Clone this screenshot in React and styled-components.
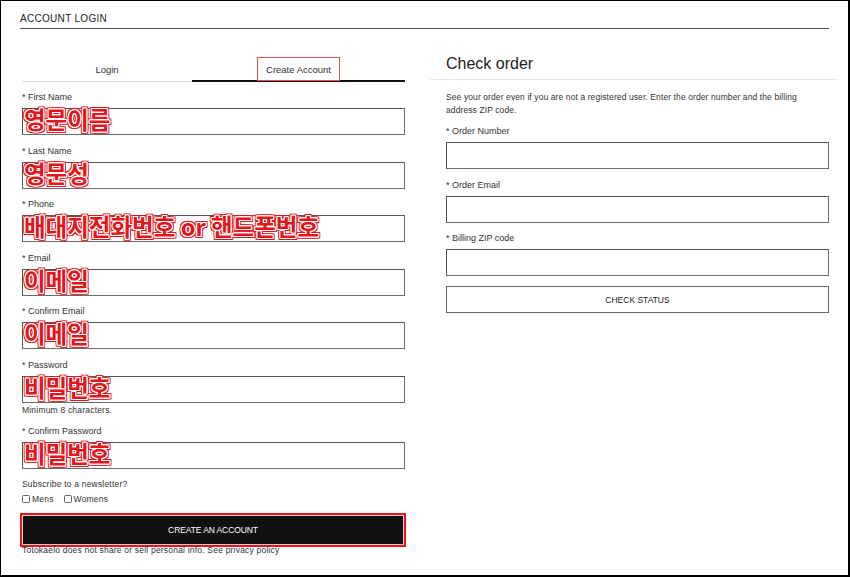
import React from "react";
import styled, { createGlobalStyle } from "styled-components";

const Global = createGlobalStyle`
  html, body { margin: 0; padding: 0; background: #fff; }
  body { font-family: "Liberation Sans", Arial, sans-serif; color: #222; }
  * { box-sizing: border-box; }
`;

const Frame = styled.div`
  width: 850px;
  height: 577px;
  border-style: solid;
  border-color: #000;
  border-width: 1px 2px 2px 1px;
  overflow: hidden;
  background: #fff;
`;

const Header = styled.div`
  margin: 0 19px;
  padding: 12px 0 3px 0;
  border-bottom: 1px solid #555;
`;

const HeaderTitle = styled.h1`
  margin: 0;
  font-size: 10px;
  line-height: 12px;
  font-weight: 400;
  letter-spacing: 0.3px;
  color: #222;
`;

const Columns = styled.div`
  display: grid;
  grid-template-columns: 383px 408px;
  column-gap: 25px;
  margin-left: 21px;
`;

const LeftCol = styled.div`
  display: flex;
  flex-direction: column;
  padding-top: 28px;
`;

const Tabs = styled.div`
  display: grid;
  grid-template-columns: 170px 1fr;
  margin-bottom: 9px;
`;

const Tab = styled.div`
  height: 25px;
  display: flex;
  justify-content: center;
  align-items: flex-start;
  font-size: 9.5px;
  color: #333;
  box-shadow: ${(p) => (p.$active ? "inset 0 -2px 0 #111" : "inset 0 -1px 0 #ddd")};
`;

const TabLabel = styled.span`
  display: inline-flex;
  align-items: center;
  height: 24px;
  padding: 0 8px;
  border: ${(p) => (p.$marked ? "1.5px solid #e05050" : "1.5px solid transparent")};
`;

const Field = styled.div`
  display: flex;
  flex-direction: column;
  margin-bottom: 9.5px;
`;

const Label = styled.label`
  font-size: 9px;
  line-height: 12px;
  color: #333;
  margin-bottom: 5px;
`;

const InputWrap = styled.div`
  position: relative;
  height: 27px;
`;

const Input = styled.input`
  display: block;
  width: 100%;
  height: 27px;
  margin: 0;
  border: 1px solid #6a6a6a;
  border-top-color: #555;
  border-left-color: #555;
  background: #fff;
  outline: none;
  padding: 0 6px;
  font: inherit;
`;

const Note = styled.span`
  position: absolute;
  top: -3px;
  left: 2px;
  font-family: "Noto Sans CJK KR", "Noto Sans", sans-serif;
  font-weight: 700;
  font-size: 23.5px;
  line-height: 28px;
  color: #e3161d;
  white-space: nowrap;
  pointer-events: none;
  text-shadow:
    1px 0 0 #fff, -1px 0 0 #fff, 0 1px 0 #fff, 0 -1px 0 #fff,
    1px 1px 0 #fff, -1px -1px 0 #fff, 1px -1px 0 #fff, -1px 1px 0 #fff,
    2px 0 0 #e3161d, -2px 0 0 #e3161d, 0 2px 0 #e3161d, 0 -2px 0 #e3161d,
    2px 2px 0 #e3161d, -2px -2px 0 #e3161d, 2px -2px 0 #e3161d, -2px 2px 0 #e3161d;
`;

const Hint = styled.div`
  font-size: 8.5px;
  line-height: 12px;
  margin-top: 1px;
  color: #333;
  letter-spacing: 0.2px;
`;

const SubTitle = styled.div`
  font-size: 8.5px;
  line-height: 12px;
  margin-top: -1px;
  color: #333;
  letter-spacing: 0.2px;
`;

const CheckRow = styled.div`
  display: flex;
  align-items: center;
  gap: 10px;
  height: 10px;
  margin-top: 4px;
`;

const CheckLabel = styled.label`
  display: inline-flex;
  align-items: center;
  gap: 2px;
  font-size: 8.5px;
  color: #333;
  letter-spacing: 0.2px;
`;

const Check = styled.input`
  appearance: none;
  width: 8px;
  height: 8px;
  margin: 0;
  border: 1px solid #666;
  border-radius: 1.5px;
  background: #fff;
`;

const PrimaryButton = styled.button`
  display: block;
  height: 28px;
  margin: 12px 2px 0 1px;
  background: #111;
  color: #fff;
  border: none;
  font-family: "Liberation Sans", Arial, sans-serif;
  font-size: 8.5px;
  letter-spacing: -0.1px;
  outline: 2px solid #e3161d;
  outline-offset: 1px;
  box-shadow: 0 0 0 1px #f3c5c5;
`;

const Disclaimer = styled.div`
  font-size: 8.5px;
  line-height: 12px;
  color: #333;
  letter-spacing: 0.2px;
`;

const RightCol = styled.div`
  display: flex;
  flex-direction: column;
  padding-top: 25px;
`;

const SectionHead = styled.div`
  padding: 0 0 5px 16px;
  border-bottom: 1px solid #e8e8e8;
`;

const SectionTitle = styled.h2`
  margin: 0;
  font-size: 16px;
  line-height: 20px;
  font-weight: 400;
  color: #222;
`;

const RightBody = styled.div`
  display: flex;
  flex-direction: column;
  padding: 11px 9px 0 16px;
`;

const Intro = styled.p`
  margin: 0 0 8px 0;
  font-size: 8.5px;
  line-height: 13px;
  color: #333;
  letter-spacing: 0.1px;
`;

const SecondaryButton = styled.button`
  display: block;
  height: 27px;
  margin-top: 0.5px;
  background: #fff;
  color: #222;
  border: 1px solid #666;
  font-family: "Liberation Sans", Arial, sans-serif;
  font-size: 8.5px;
`;

const leftFields = [
  { label: "* First Name", note: "영문이름" },
  { label: "* Last Name", note: "영문성" },
  { label: "* Phone", note: "배대지전화번호 or 핸드폰번호" },
  { label: "* Email", note: "이메일" },
  { label: "* Confirm Email", note: "이메일" },
  { label: "* Password", note: "비밀번호", hint: "Minimum 8 characters.", type: "password" },
  { label: "* Confirm Password", note: "비밀번호", type: "password" },
];

const rightFields = ["* Order Number", "* Order Email", "* Billing ZIP code"];

export default function App() {
  return (
    <>
      <Global />
      <Frame>
        <Header>
          <HeaderTitle>ACCOUNT LOGIN</HeaderTitle>
        </Header>
        <Columns>
          <LeftCol>
            <Tabs>
              <Tab>
                <TabLabel>Login</TabLabel>
              </Tab>
              <Tab $active>
                <TabLabel $marked>Create Account</TabLabel>
              </Tab>
            </Tabs>
            {leftFields.map((f) => (
              <Field key={f.label}>
                <Label>{f.label}</Label>
                <InputWrap>
                  <Input type={f.type || "text"} />
                  <Note>{f.note}</Note>
                </InputWrap>
                {f.hint && <Hint>{f.hint}</Hint>}
              </Field>
            ))}
            <SubTitle>Subscribe to a newsletter?</SubTitle>
            <CheckRow>
              <CheckLabel>
                <Check type="checkbox" />
                Mens
              </CheckLabel>
              <CheckLabel>
                <Check type="checkbox" />
                Womens
              </CheckLabel>
            </CheckRow>
            <PrimaryButton>CREATE AN ACCOUNT</PrimaryButton>
            <Disclaimer>Totokaelo does not share or sell personal info. See privacy policy</Disclaimer>
          </LeftCol>
          <RightCol>
            <SectionHead>
              <SectionTitle>Check order</SectionTitle>
            </SectionHead>
            <RightBody>
              <Intro>
                See your order even if you are not a registered user. Enter the order number and the billing address ZIP code.
              </Intro>
              {rightFields.map((l) => (
                <Field key={l}>
                  <Label>{l}</Label>
                  <Input type="text" />
                </Field>
              ))}
              <SecondaryButton>CHECK STATUS</SecondaryButton>
            </RightBody>
          </RightCol>
        </Columns>
      </Frame>
    </>
  );
}
